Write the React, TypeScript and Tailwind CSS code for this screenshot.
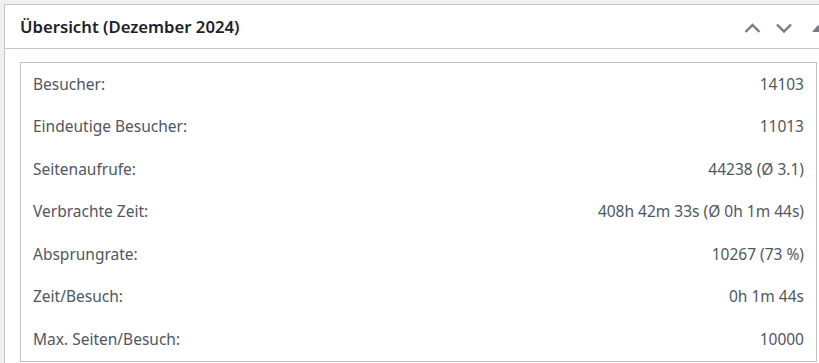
import React from "react";

const rows: [string, string][] = [
  ["Besucher:", "14103"],
  ["Eindeutige Besucher:", "11013"],
  ["Seitenaufrufe:", "44238 (Ø 3.1)"],
  ["Verbrachte Zeit:", "408h 42m 33s (Ø 0h 1m 44s)"],
  ["Absprungrate:", "10267 (73 %)"],
  ["Zeit/Besuch:", "0h 1m 44s"],
  ["Max. Seiten/Besuch:", "10000"],
];

export default function App() {
  return (
    <div
      className="w-[819px] h-[363px] overflow-hidden bg-[#f0f0f1] pl-[4px] pt-[4px]"
      style={{ fontFamily: '"Noto Sans", "Open Sans", sans-serif' }}
    >
      <div className="w-[840px] h-[400px] bg-white border border-[#c3c4c7]">
        <div className="h-[44px] border-b border-[#c3c4c7] flex items-center pl-[15px]">
          <h2 className="text-[16.7px] font-semibold text-[#1d2327] leading-none mt-[2px]">
            Übersicht (Dezember 2024)
          </h2>
          <div className="ml-auto flex items-center mr-[19px] mt-[2px]">
            <svg width="17" height="10" viewBox="0 0 17 10" className="text-[#787c82]">
              <path d="M1.5 9 L8.5 2 L15.5 9" fill="none" stroke="currentColor" strokeWidth="2.4" />
            </svg>
            <svg width="16" height="10" viewBox="0 0 16 10" className="text-[#787c82] ml-[15px]">
              <path d="M1 1.5 L8 8.5 L15 1.5" fill="none" stroke="currentColor" strokeWidth="2.4" />
            </svg>
            <svg width="12" height="8" viewBox="0 0 12 8" className="text-[#787c82] ml-[20px]">
              <path d="M0 8 L6 1 L12 8 Z" fill="currentColor" />
            </svg>
          </div>
        </div>
        <div className="pl-[15px] pt-[13px]">
          <div className="w-[797px] border border-[#c3c4c7]">
            {rows.map(([k, v]) => (
              <div
                key={k}
                className="h-[42.5px] flex items-center justify-between pl-[12px] pr-[12px] text-[15.5px] text-[#50575e]"
              >
                <span>{k}</span>
                <span>{v}</span>
              </div>
            ))}
          </div>
        </div>
      </div>
    </div>
  );
}
